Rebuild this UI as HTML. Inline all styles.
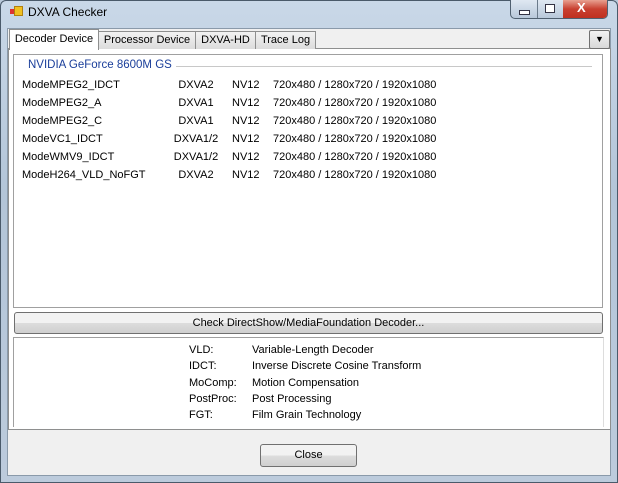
<!DOCTYPE html><html><head><style>
body{margin:0;width:618px;height:483px;overflow:hidden;font-family:"Liberation Sans",sans-serif;font-size:11px;background:#b9c9da;position:relative}
.a{position:absolute;white-space:nowrap}
.frame{left:0;top:0;width:616px;height:481px;border:1px solid #4a5a6a;border-radius:6px 6px 0 0;background:linear-gradient(#c9d8e8,#b3c5d8 40%,#bccbdc)}
.client{left:7px;top:28px;width:602px;height:446px;background:#f0f0f0;border:1px solid #8a9aaa}
.tab{top:31px;height:17px;border:1px solid #8e8f8f;border-bottom:none;background:linear-gradient(#f2f2f2,#dcdcdc);font-size:11px;line-height:17px;text-align:center;color:#000}
.row{position:absolute;left:14px;font-size:11px;color:#000;white-space:nowrap}
</style></head><body>
<div class="a frame"></div>
<div class="a" style="left:10px;top:9px;width:5px;height:5px;background:#d33"></div>
<div class="a" style="left:14px;top:6px;width:7px;height:8px;background:#f0c020;border:1px solid #b08010"></div>
<div class="a" style="left:28px;top:5px;font-size:12px;color:#000">DXVA Checker</div>
<div class="a" style="left:510px;top:0;width:96px;height:18px;border:1px solid #506070;border-top:none;border-radius:0 0 5px 5px;background:linear-gradient(#dfe8f2,#b8c8da);overflow:hidden">
<div class="a" style="left:26px;top:0;width:1px;height:18px;background:#6a7a8a"></div>
<div class="a" style="left:52px;top:0;width:44px;height:18px;background:linear-gradient(#e8a090,#c84030 50%,#c03020)"></div>
<div class="a" style="left:8px;top:10px;width:9px;height:3px;border:1px solid #334;background:#fff"></div>
<div class="a" style="left:34px;top:4px;width:8px;height:7px;border:1px solid #334;background:#fff"></div>
<div class="a" style="left:66px;top:0;color:#fff;font-weight:bold;font-size:13px">X</div>
</div>
<div class="a client"></div>
<div class="a" style="left:8px;top:48px;width:603px;height:382px;background:#fff;border:1px solid #8e8f8f;box-sizing:border-box"></div>
<div class="a tab" style="left:9px;top:29px;width:88px;height:20px;background:#fff;line-height:19px">Decoder Device</div>
<div class="a tab" style="left:98px;width:96px">Processor Device</div>
<div class="a tab" style="left:195px;width:59px">DXVA-HD</div>
<div class="a tab" style="left:255px;width:59px">Trace Log</div>
<div class="a" style="left:589px;top:30px;width:19px;height:17px;border:1px solid #707070;border-radius:2px;background:linear-gradient(#f2f2f2,#d8d8d8);text-align:center;font-size:9px;line-height:17px">▼</div>
<div class="a" style="left:13px;top:54px;width:590px;height:254px;border:1px solid #a0a0a0;box-sizing:border-box"></div>
<div class="a" style="left:145px;top:66px;width:447px;height:1px;background:#c8c8c8"></div>
<div class="a" style="left:24px;top:59px;font-size:11.5px;color:#1a3e9a;background:#fff;padding:0 4px">NVIDIA GeForce 8600M GS</div>
<div class="a" style="left:8px;top:0">
<div class="row" style="top:79px">ModeMPEG2_IDCT</div><div class="row" style="top:97px">ModeMPEG2_A</div><div class="row" style="top:115px">ModeMPEG2_C</div><div class="row" style="top:133px">ModeVC1_IDCT</div><div class="row" style="top:151px">ModeWMV9_IDCT</div><div class="row" style="top:169px">ModeH264_VLD_NoFGT</div>
</div>
<div class="a" style="left:171px;top:0">
<div class="row" style="left:0;width:50px;text-align:center;top:79px">DXVA2</div><div class="row" style="left:0;width:50px;text-align:center;top:97px">DXVA1</div><div class="row" style="left:0;width:50px;text-align:center;top:115px">DXVA1</div><div class="row" style="left:0;width:50px;text-align:center;top:133px">DXVA1/2</div><div class="row" style="left:0;width:50px;text-align:center;top:151px">DXVA1/2</div><div class="row" style="left:0;width:50px;text-align:center;top:169px">DXVA2</div>
</div>
<div class="a" style="left:218px;top:0">
<div class="row" style="top:79px">NV12</div><div class="row" style="top:97px">NV12</div><div class="row" style="top:115px">NV12</div><div class="row" style="top:133px">NV12</div><div class="row" style="top:151px">NV12</div><div class="row" style="top:169px">NV12</div>
</div>
<div class="a" style="left:259px;top:0">
<div class="row" style="top:79px">720x480 / 1280x720 / 1920x1080</div><div class="row" style="top:97px">720x480 / 1280x720 / 1920x1080</div><div class="row" style="top:115px">720x480 / 1280x720 / 1920x1080</div><div class="row" style="top:133px">720x480 / 1280x720 / 1920x1080</div><div class="row" style="top:151px">720x480 / 1280x720 / 1920x1080</div><div class="row" style="top:169px">720x480 / 1280x720 / 1920x1080</div>
</div>
<div class="a" style="left:14px;top:312px;width:589px;height:22px;border:1px solid #707070;border-radius:3px;box-sizing:border-box;background:linear-gradient(#f2f2f2 50%,#dddddd 50%,#cfcfcf);text-align:center;line-height:20px;font-size:11px">Check DirectShow/MediaFoundation Decoder...</div>
<div class="a" style="left:13px;top:337px;width:591px;height:90px;border:1px solid #a0a0a0;border-right-color:#ddd;border-bottom:none;box-sizing:border-box;background:#fff"></div>
<div class="a" style="left:189px;top:342px;font-size:11px;line-height:16.3px">VLD:<br>IDCT:<br>MoComp:<br>PostProc:<br>FGT:</div>
<div class="a" style="left:252px;top:342px;font-size:11px;line-height:16.3px">Variable-Length Decoder<br>Inverse Discrete Cosine Transform<br>Motion Compensation<br>Post Processing<br>Film Grain Technology</div>
<div class="a" style="left:260px;top:444px;width:97px;height:23px;border:1px solid #707070;border-radius:3px;box-sizing:border-box;background:linear-gradient(#f2f2f2 50%,#dddddd 50%,#cfcfcf);text-align:center;line-height:21px;font-size:11px">Close</div>
</body></html>
